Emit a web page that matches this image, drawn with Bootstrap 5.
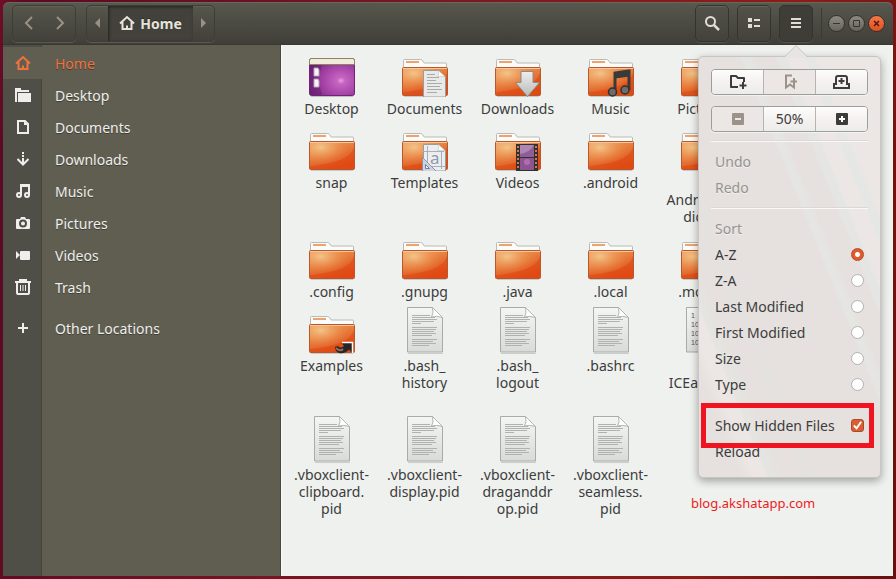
<!DOCTYPE html>
<html lang="en">
<head>
<meta charset="utf-8">
<meta name="viewport" content="width=device-width, initial-scale=1">
<title>Home</title>
<link href="https://cdn.jsdelivr.net/npm/bootstrap@5.3.0/dist/css/bootstrap.min.css" rel="stylesheet">
<style>
body{font-family:"Noto Sans","Open Sans",sans-serif;font-size:14px;line-height:17px;color:#3c3c3c;min-height:100vh;padding:2px 3px 3px;background:linear-gradient(100deg,#700d28 0,#5a0a24 3%,#7d1722 45%,#8c1d16 80%,#661010 100%)}
a{color:inherit;text-decoration:none}
svg{display:block;flex:none}
.app-window{min-height:calc(100vh - 5px);border-radius:6px 6px 0 0}
/* header bar */
.titlebar{height:43px;padding:0 8px 0 9px;background:linear-gradient(#59584e,#3f3e38);border-bottom:1px solid #393833;border-radius:6px 6px 0 0;box-shadow:inset 0 1px #69685d}
.hb-start{gap:10px}
.hb-group{height:37px;border:1px solid #3d3c36;border-radius:5px;box-shadow:0 1px #5b5a50,inset 0 1px #636257;overflow:hidden}
.hb-group button,.hb-btn{border:0;background:none;padding:0;display:flex;align-items:center;justify-content:center;color:#9a9184}
.hb-group .nav-step{width:31px}
.hb-group .path-step{width:21px}
.hb-group .path-here{width:85px;gap:5px;background:#42413b;color:#e6e4da;font-weight:700;box-shadow:inset 1px 1px 3px #24231f;text-shadow:0 -1px #2a2925}
.hb-btn{width:34px;height:37px;border:1px solid #34332e;border-radius:5px;background:linear-gradient(#54534a,#42413b);box-shadow:inset 0 1px #67665b,0 1px #55544b;color:#e0ded4}
.hb-btn.pressed{background:#3e3d37;box-shadow:0 1px #55544b}
.hb-rule{width:1px;height:30px;background:#3b3a35}
.win-set{gap:6px}
.win-btns{gap:3px}
.win-btn{width:17px;height:17px;border:1px solid #32312c;border-radius:50%;padding:0;background:linear-gradient(#8e8c82,#66645b);color:#383630}
.win-btn.quit{background:linear-gradient(#f6764b,#e0501d);color:#4a1d0c}
/* sidebar */
.places{width:278px;background:linear-gradient(90deg,#4f4f47 38px,#44433c 38px,#44433c 39px,#605e50 39px);border-right:1px solid #4a483e;padding-top:2px}
.places a{height:32px;color:#eeeeec;text-shadow:0 1px #3f3e35}
.places a>span:first-child{width:39px;display:flex;justify-content:center}
.places a>span:last-child{padding-left:13px}
.places .here{color:#f0713d;background:#605e50}
.places .apart{margin-top:9px}
/* files */
.files{background:#eff1ee;padding:4px 0 0 3px;overflow:hidden;border-left:1px solid #fafaf8}
.file-grid{display:grid;grid-template-columns:repeat(5,93px);row-gap:6px;align-items:start}
.file-grid a{display:flex;flex-direction:column;align-items:center;gap:3px;text-align:center}
.file-grid .three-line{padding-bottom:1px}
/* popover menu */
.menu-pop{position:absolute;z-index:5;top:51px;right:-68px;width:183px;padding:12px;border:1px solid #c9c5c1;border-radius:5px;box-shadow:0 3px 8px #0005;
background:linear-gradient(68deg,#0000 12%,#ece7e5 16% 19%,#e4e4e1 20% 21%,#0000 24% 30%,#e3e2df 31%,#0000 33% 60%,#e5e6e3 61% 62%,#0000 64% 70%,#e5e6e3 71% 73%,#ece7e5 74% 78%,#e5e7e4 79% 81%,#ece7e5 82%),#e6e1df}
.menu-pop .tip{position:absolute;top:-12px;right:72px}
.pop-group{height:26px;border:1px solid #9b9e99;border-radius:4px;overflow:hidden;box-shadow:0 1px #fff8}
.pop-group+.pop-group{margin-top:11px}
.pop-group button{flex:1 1 0;border:0;border-left:1px solid #b5b5b0;padding:0;background:linear-gradient(#fdfdfc,#f5f1f0 50%,#ebedea);color:#3c3c3c;display:flex;align-items:center;justify-content:center}
.pop-group button:first-child{border-left:0}
.pop-group button:disabled{background:#ece6e4;color:#9b9389}
.pop-rule{height:1px;background:#faf7f6;box-shadow:0 -1px #dcd8d5;margin:7px 0}
.pop-group+.pop-rule{margin-top:9px}
.pop-row{height:26px;padding:0 4px;display:flex;align-items:center;justify-content:space-between;width:100%;border:0;background:none;color:#3c3c3c;text-align:left}
.pop-row.dim,.pop-row:disabled{color:#96938e;text-shadow:0 1px #fff8}
.pop-row input{appearance:none;width:13px;height:13px;margin:0;border:1px solid #b4b1ad;border-radius:50%;background:#fff}
.pop-row input[type=radio]:checked{border-color:#b34a22;background:radial-gradient(circle,#fff 0 2px,#e2592b 3px)}
.pop-row input[type=checkbox]{border-radius:3px;border-color:#a94b2b;background:#dc5f33 url("data:image/svg+xml,%3Csvg xmlns='http://www.w3.org/2000/svg' viewBox='0 0 12 12'%3E%3Cpath d='M2 6l3 3 5-7' fill='none' stroke='white' stroke-width='2'/%3E%3C/svg%3E") center/contain}
.callout{position:absolute;inset:-10px -6px -9px -10px;border:5px solid #f01420;pointer-events:none}
.site-mark{position:absolute;top:438px;left:-8px;color:#ed1c24;font-size:13px;white-space:nowrap}
</style>
</head>
<body>
<svg width="0" height="0" class="position-absolute" aria-hidden="true">
<defs>
<linearGradient id="gFold" x1="0" y1="0" x2=".5" y2="1"><stop offset="0" stop-color="#eda566"/><stop offset=".5" stop-color="#e67c3c"/><stop offset="1" stop-color="#e04f1a"/></linearGradient>
<radialGradient id="gGlow" cx=".25" cy=".2" r=".65"><stop offset="0" stop-color="#f3cb90" stop-opacity=".9"/><stop offset="1" stop-color="#f08a45" stop-opacity="0"/></radialGradient>
<linearGradient id="gPage" x1="0" y1="0" x2="0" y2="1"><stop offset="0" stop-color="#f5f6f4"/><stop offset="1" stop-color="#d9dbd8"/></linearGradient>
<radialGradient id="gDesk" cx=".7" cy=".6" r=".75"><stop offset="0" stop-color="#f09be0"/><stop offset=".12" stop-color="#c565c2"/><stop offset=".5" stop-color="#a845a9"/><stop offset="1" stop-color="#75247c"/></radialGradient>
<linearGradient id="gArrow" x1="0" y1="0" x2="0" y2="1"><stop offset="0" stop-color="#eee"/><stop offset="1" stop-color="#b9bbb8"/></linearGradient>
<symbol id="folder" viewBox="0 0 48 48">
<path d="M3 48h42" stroke="#000" stroke-opacity=".16" stroke-width="2"/>
<path d="M2.500 20v-8.500q0-1 1-1h16q1.500 0 2.300 1.300l1.400 2.200h21.300q1 0 1 1v5z" fill="#fbfbfa" stroke="#b9bab7"/>
<path d="M5 12h13v2H5z" fill="#eda36d"/>
<rect x="1.500" y="18.500" width="45" height="28" rx="1" fill="url(#gFold)" stroke="#b9582c"/>
<rect x="2" y="19" width="44" height="27" fill="url(#gGlow)"/>
<path d="M46 24c-3 9-12 14-29 17-6 1-11 2-15 2v3h44z" fill="#e04510" opacity=".55"/>
<path d="M2 19.500h44" stroke="#f6c79d"/>
</symbol>
<symbol id="page" viewBox="0 0 48 48">
<path d="M7 47.500h35" stroke="#000" stroke-opacity=".15"/>
<path d="M6.500 1.500h25l10 10V46h-35z" fill="url(#gPage)" stroke="#a9aba8"/>
<path d="M31.500 1.500q1.500 6-1 9.500 5-1.500 11 .5z" fill="#fff" stroke="#b4b6b3"/>
<path d="M11 9.500h18M11 11.500h23M11 13.500h25M11 15.500h22M11 17.500h9M11 21.500h25M11 23.500h24M11 25.500h22M11 27.500h24M11 29.500h20M11 33.500h25M11 35.500h21M11 37.500h24M11 39.500h17" stroke="#b0b2af"/>
</symbol>
<symbol id="house" viewBox="0 0 16 16"><path d="M1 8.500L8 2l7 6.500M3.500 7v7h9V7M8 14v-3.500" fill="none" stroke="currentColor" stroke-width="2"/></symbol>
</defs>
</svg>

<div class="app-window d-flex flex-column">
<header class="titlebar d-flex align-items-center">
  <div class="hb-start d-flex">
    <div class="hb-group d-flex">
      <button class="nav-step" aria-label="Back"><svg width="16" height="16" viewBox="0 0 16 16"><path d="M11 2L5 8l6 6" fill="none" stroke="currentColor" stroke-width="2"/></svg></button>
      <button class="nav-step" aria-label="Forward"><svg width="16" height="16" viewBox="0 0 16 16"><path d="M5 2l6 6-6 6" fill="none" stroke="currentColor" stroke-width="2"/></svg></button>
    </div>
    <div class="hb-group d-flex">
      <button class="path-step" aria-label="Scroll path left"><svg width="6" height="10"><path d="M5 0v10L0 5z" fill="currentColor"/></svg></button>
      <button class="path-here"><svg width="16" height="16"><use href="#house"/></svg>Home</button>
      <button class="path-step" aria-label="Scroll path right"><svg width="6" height="10"><path d="M0 0v10l5-5z" fill="currentColor"/></svg></button>
    </div>
  </div>
  <div class="d-flex align-items-center gap-2 ms-auto">
    <button class="hb-btn" aria-label="Search"><svg width="16" height="16" viewBox="0 0 16 16"><circle cx="6.500" cy="6.500" r="4.500" fill="none" stroke="currentColor" stroke-width="2"/><path d="M9.800 9.800L15 15" stroke="currentColor" stroke-width="2.500"/></svg></button>
    <button class="hb-btn" aria-label="List view"><svg width="14" height="12"><path d="M1 1h4v4H1zM1 7h4v4H1zM7 2h6v2H7zM7 8h6v2H7z" fill="currentColor"/></svg></button>
    <div class="position-relative">
      <button class="hb-btn pressed" aria-label="Menu" aria-expanded="true"><svg width="12" height="12"><path d="M1 1h10v2H1zM1 5h10v2H1zM1 9h10v2H1z" fill="currentColor"/></svg></button>
      <div class="menu-pop" role="menu">
        <svg class="tip" width="24" height="13"><path d="M0 13L12 .5 24 13z" fill="#e8e4e2"/><path d="M0 11.500h1L12 .5l11 11h1" fill="none" stroke="#c9c5c1"/></svg>
        <div class="pop-group d-flex">
          <button aria-label="New folder"><svg width="18" height="16" viewBox="0 0 18 16"><path d="M9 13H2V2h5l2 2h6v4" fill="none" stroke="currentColor" stroke-width="2" stroke-linejoin="round"/><path d="M14 8v7M10.500 11.500h7" stroke="currentColor" stroke-width="2"/></svg></button>
          <button disabled aria-label="Bookmark"><svg width="16" height="16" viewBox="0 0 16 16"><path d="M10 1.500H4v12l4-3 4 3V11" fill="none" stroke="currentColor" stroke-width="2"/><path d="M12 4v7M8.500 7.500h6.500" stroke="currentColor" stroke-width="2"/></svg></button>
          <button aria-label="New tab"><svg width="17" height="16" viewBox="0 0 17 16"><path d="M1 14v-4h2V4q0-2 2-2h7q2 0 2 2v6h2v4z" fill="none" stroke="currentColor" stroke-width="2"/><path d="M8.500 4v6M5.500 7h6" stroke="currentColor" stroke-width="2"/></svg></button>
        </div>
        <div class="pop-group d-flex">
          <button disabled aria-label="Zoom out"><svg width="12" height="12"><rect width="12" height="12" rx="1" fill="currentColor"/><path d="M3 6h6" stroke="#ece6e4" stroke-width="2"/></svg></button>
          <button>50%</button>
          <button aria-label="Zoom in"><svg width="12" height="12"><rect width="12" height="12" rx="1" fill="currentColor"/><path d="M3 6h6M6 3v6" stroke="#fff" stroke-width="2"/></svg></button>
        </div>
        <div class="pop-rule"></div>
        <button class="pop-row" disabled>Undo</button>
        <button class="pop-row" disabled>Redo</button>
        <div class="pop-rule"></div>
        <div class="pop-row dim">Sort</div>
        <label class="pop-row">A-Z<input type="radio" name="sort" checked></label>
        <label class="pop-row">Z-A<input type="radio" name="sort"></label>
        <label class="pop-row">Last Modified<input type="radio" name="sort"></label>
        <label class="pop-row">First Modified<input type="radio" name="sort"></label>
        <label class="pop-row">Size<input type="radio" name="sort"></label>
        <label class="pop-row">Type<input type="radio" name="sort"></label>
        <div class="pop-rule"></div>
        <div class="position-relative"><label class="pop-row">Show Hidden Files<input type="checkbox" checked></label><div class="callout"></div></div>
        <button class="pop-row">Reload</button>
        <div class="site-mark">blog.akshatapp.com</div>
      </div>
    </div>
    <div class="win-set d-flex align-items-center">
      <div class="hb-rule"></div>
      <div class="win-btns d-flex">
        <button class="win-btn" aria-label="Minimize"><svg width="15" height="15"><path d="M4 7.500h7" stroke="currentColor"/></svg></button>
        <button class="win-btn" aria-label="Maximize"><svg width="15" height="15"><path d="M4.500 4.500h6v6h-6z" fill="none" stroke="currentColor"/></svg></button>
        <button class="win-btn quit" aria-label="Close"><svg width="15" height="15"><path d="M5 5l5 5M10 5l-5 5" stroke="currentColor" stroke-width="1.500"/></svg></button>
      </div>
    </div>
  </div>
</header>
<div class="d-flex flex-grow-1">
  <nav class="places flex-shrink-0" aria-label="Places">
    <a href="#" class="here d-flex align-items-center"><span><svg width="16" height="16"><use href="#house"/></svg></span><span>Home</span></a>
    <a href="#" class="d-flex align-items-center"><span><svg width="16" height="16"><path d="M0 1h6v2h8v2H2v10H0z" fill="currentColor"/><path d="M3 6h13v9H3z" fill="currentColor"/></svg></span><span>Desktop</span></a>
    <a href="#" class="d-flex align-items-center"><span><svg width="16" height="16"><path d="M3 2h7l3 3v9H3z" fill="none" stroke="currentColor" stroke-width="2"/><path d="M9 2v4h4z" fill="currentColor"/></svg></span><span>Documents</span></a>
    <a href="#" class="d-flex align-items-center"><span><svg width="16" height="16"><path d="M7 1h2v2H7zM7 4h2v2H7zM7 7h2v5H7z" fill="currentColor"/><path d="M2.500 8L8 13.500 13.500 8" fill="none" stroke="currentColor" stroke-width="2"/></svg></span><span>Downloads</span></a>
    <a href="#" class="d-flex align-items-center"><span><svg width="16" height="16"><path d="M6 12V2h8v10M6 3h8" fill="none" stroke="currentColor" stroke-width="2"/><circle cx="4" cy="12" r="2" fill="none" stroke="currentColor" stroke-width="2"/><circle cx="12" cy="12" r="2" fill="none" stroke="currentColor" stroke-width="2"/></svg></span><span>Music</span></a>
    <a href="#" class="d-flex align-items-center"><span><svg width="16" height="16"><path d="M2 4h3l1-2h4l1 2h3q1 0 1 1v8q0 1-1 1H2q-1 0-1-1V5q0-1 1-1z" fill="currentColor"/><circle cx="8" cy="8.500" r="3" fill="none" stroke="#4f4f47" stroke-width="2"/></svg></span><span>Pictures</span></a>
    <a href="#" class="d-flex align-items-center"><span><svg width="16" height="16"><path d="M1 4l4 4-4 4zM6 4h8q1 0 1 1v7q0 1-1 1H6q-1 0-1-1V5q0-1 1-1z" fill="currentColor"/></svg></span><span>Videos</span></a>
    <a href="#" class="d-flex align-items-center"><span><svg width="16" height="16"><path d="M0 3h16M5 2V1h6v1" fill="none" stroke="currentColor" stroke-width="2"/><path d="M2 3v11q0 1 1 1h10q1 0 1-1V3" fill="none" stroke="currentColor" stroke-width="2"/><path d="M5.500 6v6M8 6v6M10.500 6v6" stroke="currentColor"/></svg></span><span>Trash</span></a>
    <a href="#" class="apart d-flex align-items-center"><span><svg width="16" height="16"><path d="M8 3v10M3 8h10" stroke="currentColor" stroke-width="2"/></svg></span><span>Other Locations</span></a>
  </nav>
  <main class="files flex-grow-1">
    <div class="file-grid">
      <a href="#"><svg width="48" height="48"><path d="M3 48h42" stroke="#000" stroke-opacity=".2" stroke-width="2"/><rect x="1.500" y="9.500" width="45" height="37" rx="2" fill="url(#gDesk)" stroke="#6f2475"/><path d="M2 15h12l-4 16 4 15H2z" fill="#5f1d69" opacity=".5"/><path d="M1.500 15.500v-4q0-2 2-2h41q2 0 2 2v4z" fill="#efecd9" stroke="#8d8468"/><path d="M6 19h4l1 2v6H6zM6 30h4l1 2v6H6z" fill="#f6f3f6" stroke="#b5a5b5"/></svg>Desktop</a>
      <a href="#"><svg width="48" height="48"><use href="#folder"/><path d="M22.500 21.500h15l7 6.500v20h-22z" fill="#e9eae8" stroke="#9a9c99"/><path d="M37.500 21.500q1 4-1 6 4-1 8 .5z" fill="#fff" stroke="#b4b6b3" stroke-width=".5"/><path d="M26 25.500h8M26 28.500h12M26 31.500h9M26 34.500h15M26 37.500h13M26 40.500h15M26 43.500h10" stroke="#a9aba8"/></svg>Documents</a>
      <a href="#"><svg width="48" height="48"><use href="#folder"/><path d="M27 22.500h12v11h6.500L33.500 47.500 21.500 33.500H27z" fill="url(#gArrow)" stroke="#8b8d8a"/></svg>Downloads</a>
      <a href="#"><svg width="48" height="48"><use href="#folder"/><path d="M28 43V24l14-2v19" fill="none" stroke="#3a3a38" stroke-width="3"/><path d="M28 27l14-2" stroke="#3a3a38" stroke-width="5"/><circle cx="25.500" cy="43" r="4" fill="#6c6c69" stroke="#31312f" stroke-width="1.500"/><circle cx="38" cy="41" r="4" fill="#6c6c69" stroke="#31312f" stroke-width="1.500"/></svg>Music</a>
      <a href="#"><svg width="48" height="48"><use href="#folder"/></svg>Pictures</a>

      <a href="#"><svg width="48" height="48"><use href="#folder"/></svg>snap</a>
      <a href="#"><svg width="48" height="48"><use href="#folder"/><path d="M22.500 21.500h15l7 6.500v20h-22z" fill="#eceeed" stroke="#9a9c99"/><path d="M37.500 21.500q1 4-1 6 4-1 8 .5z" fill="#fff" stroke="#b4b6b3" stroke-width=".5"/><path d="M22 28.500h21M26.500 23v20M40.500 29v17M29 43.500h15" stroke="#a8aec0"/><text x="29" y="41" font-family="Noto Sans" font-size="17" fill="#9298b0">a</text><path d="M21.500 34.500v14h14z" fill="#cfd3e0" stroke="#8b93ab"/><path d="M24.500 41.500v4h4z" fill="#f3f3f6" stroke="#737c98"/></svg>Templates</a>
      <a href="#"><svg width="48" height="48"><use href="#folder"/><rect x="22" y="21" width="22" height="27" fill="#33302f"/><rect x="26" y="22" width="14" height="12" fill="#ad86b4"/><rect x="26" y="35" width="14" height="12" fill="#8b5591"/><path d="M26 31q9-1 14-9v12H26z" fill="#7b4583" opacity=".6"/><circle cx="33" cy="39" r="3" fill="#b06cb1"/><path d="M24 23v24M42 23v24" stroke="#d9754a" stroke-width="2" stroke-dasharray="2 2"/></svg>Videos</a>
      <a href="#"><svg width="48" height="48"><use href="#folder"/></svg>.android</a>
      <a href="#" class="three-line"><svg width="48" height="48"><use href="#folder"/></svg><span><br>AndroidStu<br>dio3.6</span></a>

      <a href="#"><svg width="48" height="48"><use href="#folder"/></svg>.config</a>
      <a href="#"><svg width="48" height="48"><use href="#folder"/></svg>.gnupg</a>
      <a href="#"><svg width="48" height="48"><use href="#folder"/></svg>.java</a>
      <a href="#"><svg width="48" height="48"><use href="#folder"/></svg>.local</a>
      <a href="#"><svg width="48" height="48"><use href="#folder"/></svg>.mozilla</a>

      <a href="#"><svg width="48" height="48"><use href="#folder"/><path d="M27 41l3-1q2 3 6 0l-2.500-3H44V47l-3-3.500Q37 48 31 47 27 45.500 27 41z" fill="#262626"/><path d="M34 36.500H44.500V47" fill="none" stroke="#fff" stroke-width="1.500"/><path d="M28 42q4 4 7 1" fill="none" stroke="#9b6a58" stroke-width="2"/></svg>Examples</a>
      <a href="#"><svg width="48" height="48"><use href="#page"/></svg><span>.bash_<br>history</span></a>
      <a href="#"><svg width="48" height="48"><use href="#page"/></svg><span>.bash_<br>logout</span></a>
      <a href="#"><svg width="48" height="48"><use href="#page"/></svg>.bashrc</a>
      <a href="#" class="three-line"><svg width="48" height="48" font-family="Liberation Sans" font-size="7" fill="#555"><path d="M6.500 1.500h35V46h-35z" fill="url(#gPage)" stroke="#a9aba8"/><text x="11" y="12">1</text><text x="11" y="21">10</text><text x="11" y="30">10</text><text x="11" y="39">10</text></svg><span><br>ICEauthori<br>&nbsp;</span></a>

      <a href="#"><svg width="48" height="48"><use href="#page"/></svg><span>.vboxclient-<br>clipboard.<br>pid</span></a>
      <a href="#"><svg width="48" height="48"><use href="#page"/></svg><span>.vboxclient-<br>display.pid</span></a>
      <a href="#"><svg width="48" height="48"><use href="#page"/></svg><span>.vboxclient-<br>draganddr<br>op.pid</span></a>
      <a href="#"><svg width="48" height="48"><use href="#page"/></svg><span>.vboxclient-<br>seamless.<br>pid</span></a>
    </div>
  </main>
</div>
</div>
<script src="https://cdn.jsdelivr.net/npm/bootstrap@5.3.0/dist/js/bootstrap.bundle.min.js"></script>
</body>
</html>
